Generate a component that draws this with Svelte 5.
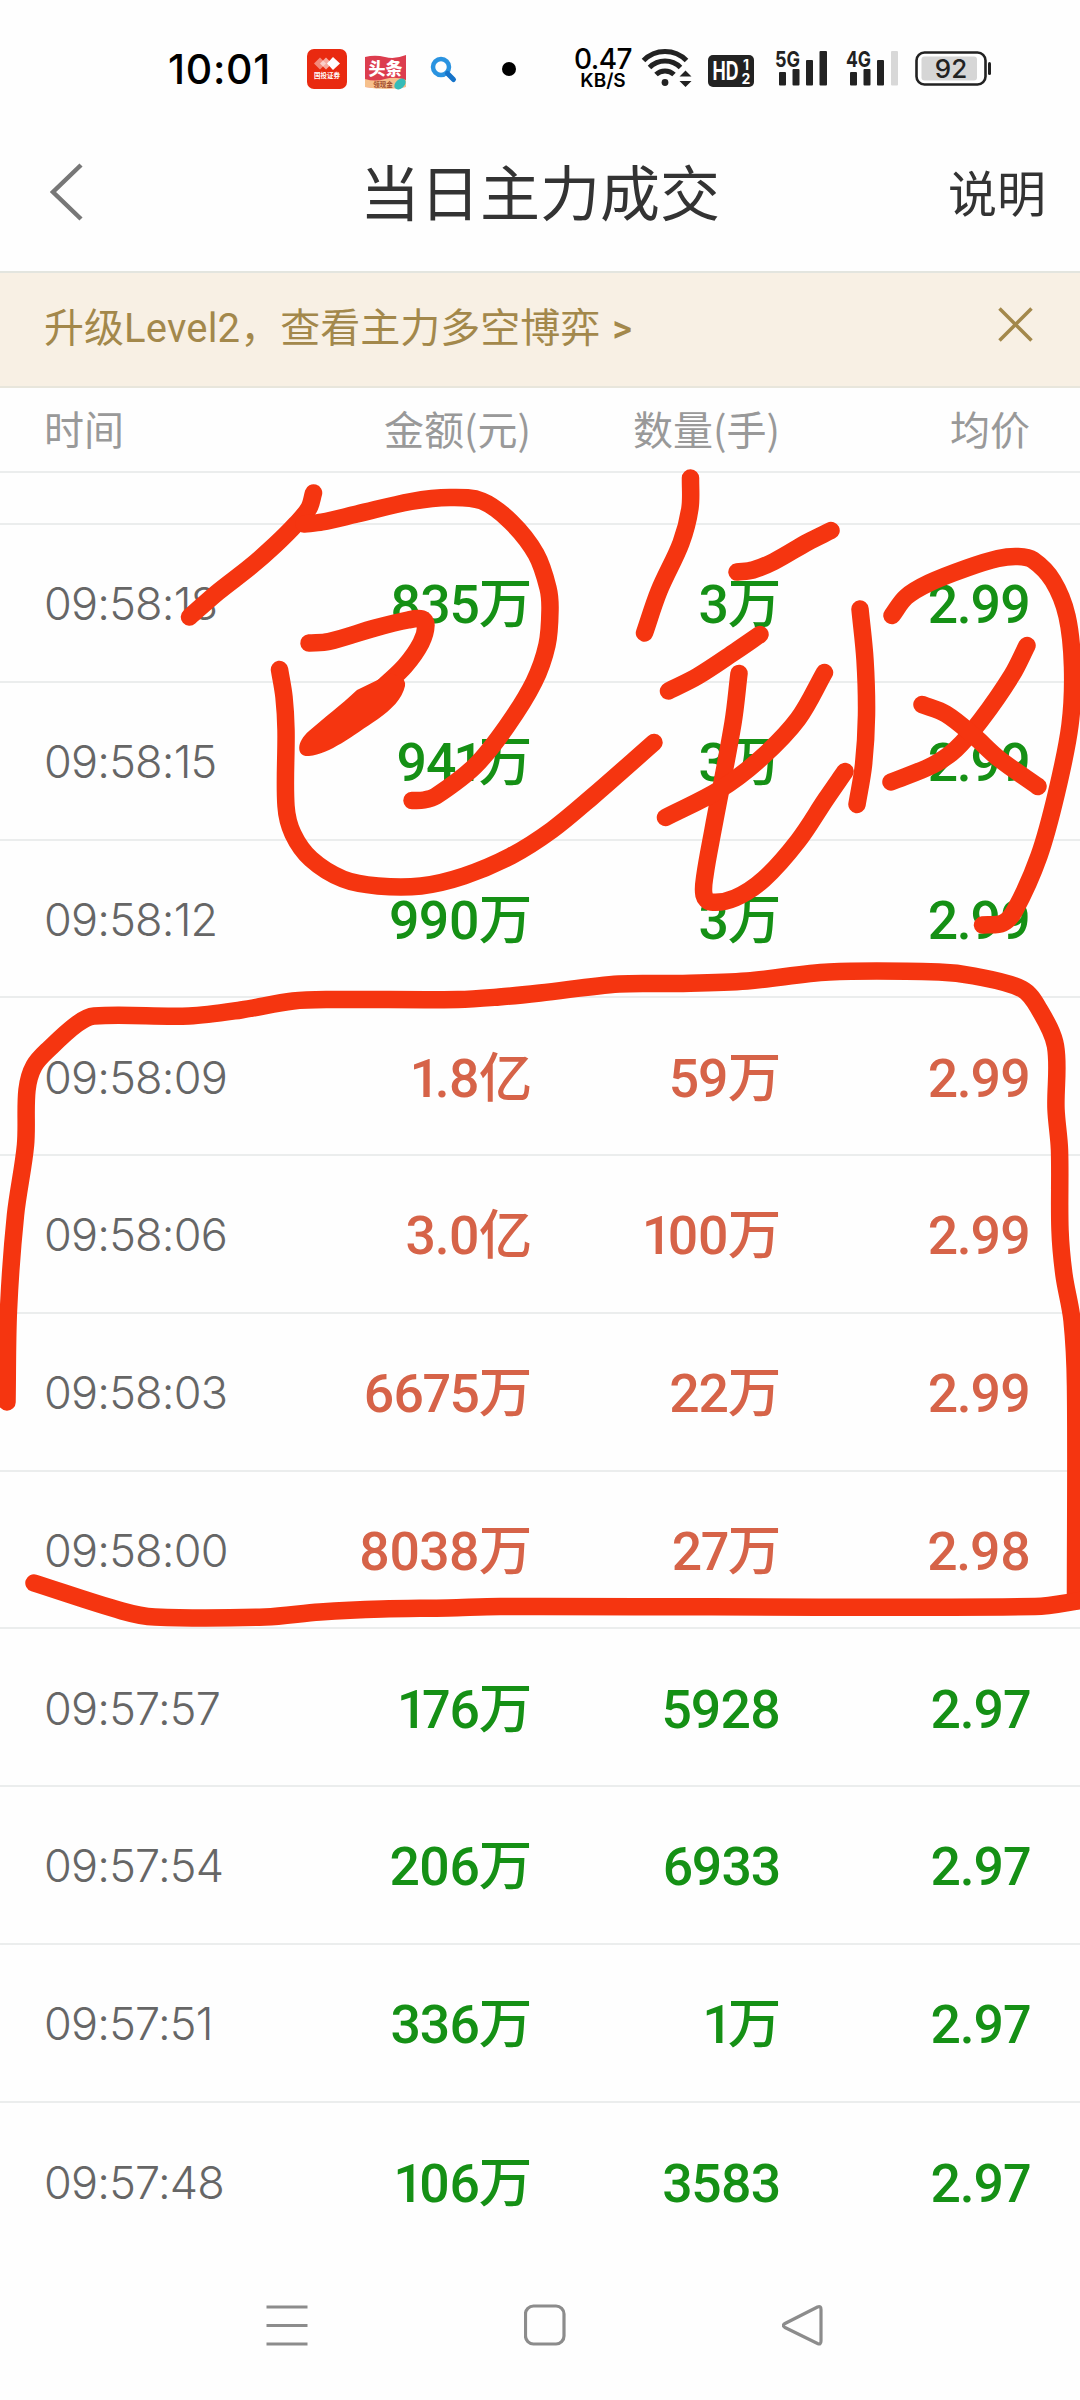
<script lang="ts">
  type Trend = 'up' | 'down';
  type Point = [number, number];

  interface Trade {
    time: string;
    amount: string;
    volume: string;
    price: string;
    trend: Trend;
  }

  const trades: Trade[] = [
    { time: '09:58:18', amount: '835万', volume: '3万', price: '2.99', trend: 'down' },
    { time: '09:58:15', amount: '941万', volume: '3万', price: '2.99', trend: 'down' },
    { time: '09:58:12', amount: '990万', volume: '3万', price: '2.99', trend: 'down' },
    { time: '09:58:09', amount: '1.8亿', volume: '59万', price: '2.99', trend: 'up' },
    { time: '09:58:06', amount: '3.0亿', volume: '100万', price: '2.99', trend: 'up' },
    { time: '09:58:03', amount: '6675万', volume: '22万', price: '2.99', trend: 'up' },
    { time: '09:58:00', amount: '8038万', volume: '27万', price: '2.98', trend: 'up' },
    { time: '09:57:57', amount: '176万', volume: '5928', price: '2.97', trend: 'down' },
    { time: '09:57:54', amount: '206万', volume: '6933', price: '2.97', trend: 'down' },
    { time: '09:57:51', amount: '336万', volume: '1万', price: '2.97', trend: 'down' },
    { time: '09:57:48', amount: '106万', volume: '3583', price: '2.97', trend: 'down' }
  ];

  // Pen strokes of the hand-drawn markup, in page pixels
  const strokes: Point[][] = [
    [[313.5, 493], [309, 508], [296, 524], [275, 545], [250, 567], [218, 592], [189.5, 617]],
    [[304, 524], [322, 522], [357, 514], [411, 501.5], [450, 497.5], [482, 501], [511, 522], [536, 554], [548, 588], [550, 610], [547, 645], [534, 682], [507, 726], [475, 766], [436, 796], [424, 800], [412, 800.5]],
    [[309, 643], [329, 641.5], [375, 628], [408, 620], [422, 619], [426, 625], [421, 643], [405, 666], [382, 688]],
    [[279.5, 669.5], [284, 697], [286, 730], [286, 806], [293, 834], [311, 859], [343, 879], [378, 886], [421, 886], [464, 876], [511, 856], [552, 830], [592, 797], [654, 742.5]],
    [[690.5, 478], [690, 508], [681, 543], [659, 591], [644.5, 633]],
    [[737, 572], [753, 570], [774, 561.5], [808, 542], [831, 530.5]],
    [[668.5, 691], [698, 676], [736, 651], [760, 634.5]],
    [[739, 673.5], [733, 723], [713, 830], [705, 875], [704, 895], [711, 902], [735, 898], [764, 879], [798, 841], [826, 799], [845, 771.5]],
    [[665.5, 817.5], [719, 790], [760, 759], [798, 719], [824.5, 672.5]],
    [[860, 609], [865, 660], [866.5, 715], [863.5, 765], [857, 804.5]],
    [[892, 615.5], [906, 597], [929, 583], [967, 568], [998, 558.5], [1018, 556.5], [1033, 560], [1053, 581], [1067, 616], [1072.5, 667], [1070, 725], [1056.5, 793], [1039, 856], [1015, 910], [1003, 923], [982.5, 925]],
    [[1027, 645.5], [1012, 675], [981, 720], [956, 749], [933, 765], [891, 782]],
    [[922, 704.5], [946, 714], [974, 736], [998, 758], [1038, 786.5]],
    [[7, 1402], [8.5, 1310], [15.5, 1215], [25.5, 1145], [27, 1090], [34, 1066], [50, 1048], [77, 1024], [94, 1016], [189, 1016], [241, 1010], [293, 1001], [330, 999.5], [458, 999.5], [499, 997], [540, 993], [619, 984], [678, 983.5], [747, 981], [829, 972], [939, 972], [974, 976], [1022, 989], [1039, 1009], [1055.5, 1046], [1056, 1109], [1059.5, 1150], [1060, 1230], [1064, 1275], [1072, 1320], [1075.5, 1386], [1075.5, 1597]],
    [[34, 1583], [122, 1611], [155, 1617], [265, 1617], [320, 1612], [382, 1609], [448, 1608], [500, 1606.5], [1035, 1606.5], [1084, 1600]]
  ];

  function smooth(points: Point[]): string {
    let d = `M${points[0][0]} ${points[0][1]}`;
    for (let i = 0; i < points.length - 1; i++) {
      const prev = points[i - 1] ?? points[i];
      const from = points[i];
      const to = points[i + 1];
      const next = points[i + 2] ?? to;
      // cap handles at a third of the segment so uneven spacing does not overshoot
      const len = Math.hypot(to[0] - from[0], to[1] - from[1]) / 3;
      const a = Math.hypot(to[0] - prev[0], to[1] - prev[1]) || 1;
      const b = Math.hypot(next[0] - from[0], next[1] - from[1]) || 1;
      const c1x = from[0] + ((to[0] - prev[0]) / a) * len;
      const c1y = from[1] + ((to[1] - prev[1]) / a) * len;
      const c2x = to[0] - ((next[0] - from[0]) / b) * len;
      const c2y = to[1] - ((next[1] - from[1]) / b) * len;
      d += ` C${c1x} ${c1y} ${c2x} ${c2y} ${to[0]} ${to[1]}`;
    }
    return d;
  }
</script>

<div class="screen">
  <div class="status-bar">
    <span class="clock">10:01</span>
    <svg class="app-icons" width="220" height="50" viewBox="300 44 220 50">
      <rect x="307" y="49" width="40" height="40" rx="7" fill="#e92a10" />
      <g fill="#fff">
        <path d="M314 63.500l6-6 6 6-6 6z" opacity="0.45" />
        <path d="M320 63.500l6-6 6 6-6 6z" opacity="0.6" />
        <path d="M327 63.500l6-6.500 7 6.500-7 6.500z" />
        <text x="327" y="77.500" class="tiny-label">国投证券</text>
      </g>
      <path d="M365 57q10-2.500 20 0t21-2v32q-10 1-20 1t-21-1z" fill="#dc3d4e" />
      <path d="M365 79q10 3 20 0t21 1v7q-10 2-20 2t-21-2z" fill="#f6c08c" />
      <ellipse cx="400" cy="84" rx="6.500" ry="4.500" transform="rotate(-42 400 84)" fill="#35bcb8" />
      <text x="385.500" y="74.500" class="news-label">头条</text>
      <text x="383" y="87" class="gift-label">领现金</text>
      <circle cx="441" cy="67" r="8" fill="none" stroke="#2a93e0" stroke-width="4.500" />
      <path d="M447.500 73.500l6 6" stroke="#1573c9" stroke-width="5" stroke-linecap="round" />
      <circle cx="509" cy="69" r="7" fill="#000" />
    </svg>
    <div class="net-speed">
      <span class="rate">0.47</span>
      <span class="unit">KB/S</span>
    </div>
    <svg class="signals" width="360" height="50" viewBox="640 44 360 50">
      <g fill="none" stroke="#222" stroke-width="5">
        <path d="M643.500 60.500a30 30 0 0 1 43 0" />
        <path d="M649.500 67.500a22 22 0 0 1 31 0" />
        <path d="M656 74.500a13 13 0 0 1 18 0" />
      </g>
      <circle cx="665" cy="82.500" r="3.400" fill="#222" />
      <path d="M685.500 70.500l6 6h-12zM685.500 87l-6-6h12z" fill="#222" />
      <rect x="708" y="55" width="46" height="32" rx="5" fill="#222" />
      <text x="712.500" y="79.500" class="hd-label" textLength="26" lengthAdjust="spacingAndGlyphs">HD</text>
      <text x="746" y="70" class="hd-index">1</text>
      <text x="746" y="83.500" class="hd-index">2</text>
      <g fill="#222">
        <text x="775" y="66.500" class="gen-label" textLength="25" lengthAdjust="spacingAndGlyphs">5G</text>
        <rect x="779" y="72" width="7" height="13.500" rx="1" />
        <rect x="792.500" y="69" width="7" height="16.500" rx="1" />
        <rect x="806" y="60" width="7" height="25.500" rx="1" />
        <rect x="819.500" y="51" width="7.500" height="34.500" rx="1" />
        <text x="846" y="66.500" class="gen-label" textLength="25" lengthAdjust="spacingAndGlyphs">4G</text>
        <rect x="850" y="72" width="7" height="13.500" rx="1" />
        <rect x="863.500" y="69" width="7" height="16.500" rx="1" />
        <rect x="877" y="60" width="7" height="25.500" rx="1" />
        <rect x="891" y="51" width="7" height="34.500" rx="1" fill="#d8d8d8" />
      </g>
      <rect x="916.500" y="52.500" width="69" height="32" rx="8" fill="#fff" stroke="#222" stroke-width="2.600" />
      <rect x="921.500" y="56.500" width="55.500" height="24" rx="3" fill="#d6d6d6" />
      <rect x="988" y="62" width="3" height="13" rx="1.500" fill="#222" />
      <text x="951" y="78" class="battery-label">92</text>
    </svg>
  </div>

  <header class="title-bar">
    <svg class="back" width="34" height="62" viewBox="0 0 34 62">
      <path d="M31 4L3 31l28 27" fill="none" stroke="#777" stroke-width="4.500" />
    </svg>
    <h1>当日主力成交</h1>
    <span class="explain">说明</span>
  </header>

  <div class="banner">
    <span class="promo">升级<span class="latin">Level2</span>，查看主力多空博弈<span class="arrow">&gt;</span></span>
    <svg width="35" height="35" viewBox="0 0 35 35">
      <path d="M1.500 1.500l32 32M33.500 1.500l-32 32" stroke="#a3884b" stroke-width="3.500" />
    </svg>
  </div>

  <div class="columns head">
    <span>时间</span>
    <span>金额(元)</span>
    <span>数量(手)</span>
    <span>均价</span>
  </div>
  <div class="cut-row"></div>

  <main>
    {#each trades as trade (trade.time)}
      <div class="columns row {trade.trend}">
        <span class="time">{trade.time}</span>
        <span class="value">{trade.amount}</span>
        <span class="value">{trade.volume}</span>
        <span class="value">{trade.price}</span>
      </div>
    {/each}
  </main>

  <nav>
    <svg width="42" height="42" viewBox="0 0 42 42">
      <path d="M0.500 3h41M0.500 21.500h41M0.500 40h41" />
    </svg>
    <svg width="42" height="42" viewBox="0 0 42 42">
      <rect x="1.500" y="2" width="38.500" height="38" rx="8" />
    </svg>
    <svg width="42" height="42" viewBox="0 0 42 42">
      <path d="M35.500 3L3 19.500q-3.500 2 0 4l32.500 16q3.500 1.500 3.500-2.500v-31.500q0-4-3.500-2.500z" />
    </svg>
  </nav>

  <svg class="markup" width="1080" height="2400" viewBox="0 0 1080 2400">
    {#each strokes as stroke}
      <path class="pen" d={smooth(stroke)} />
    {/each}
    <path class="blob" d="M392 673L357 690C340 706 325 717 309 731C296 742 296 757 309 756C330 754 352 736 378 719C392 709 402 699 405 686Q406 679 399 677Z" />
  </svg>
</div>

<style>
  :global(body) {
    margin: 0;
    background: #fefefe;
  }

  .screen {
    position: relative;
    display: flex;
    flex-direction: column;
    width: 1080px;
    height: 2400px;
    overflow: hidden;
    background: #fefefe;
    font-family: Inter, 'Noto Sans CJK SC', sans-serif;
  }

  .status-bar {
    display: flex;
    align-items: center;
    height: 138px;
    box-sizing: border-box;
    padding-left: 168px;
    color: #000;
  }

  .clock {
    width: 132px;
    font-size: 41px;
    font-weight: 450;
    letter-spacing: 0.7px;
    white-space: nowrap;
  }

  .app-icons,
  .signals {
    flex: none;
  }

  .net-speed {
    display: flex;
    flex-direction: column;
    align-items: center;
    width: 72px;
    margin: 2px 1px 0 47px;
    font-weight: 600;
  }

  .rate {
    font-size: 28px;
    font-weight: 500;
    letter-spacing: -0.5px;
    line-height: 22px;
  }

  .unit {
    font-size: 19px;
    line-height: 22px;
  }

  .tiny-label {
    font-size: 6.5px;
    font-weight: 700;
    text-anchor: middle;
  }

  .news-label {
    font-size: 17px;
    font-weight: 900;
    text-anchor: middle;
    fill: #fff;
  }

  .gift-label {
    font-size: 6.5px;
    font-weight: 700;
    text-anchor: middle;
    fill: #a04a2c;
  }

  .hd-label {
    font-size: 25px;
    font-weight: 700;
    fill: #fff;
  }

  .hd-index {
    font-size: 14px;
    font-weight: 700;
    text-anchor: middle;
    fill: #fff;
  }

  .gen-label {
    font-size: 22px;
    font-weight: 700;
  }

  .battery-label {
    font-size: 26px;
    font-weight: 500;
    text-anchor: middle;
    fill: #222;
  }

  .title-bar {
    display: grid;
    grid-template-columns: 200px 1fr 200px;
    align-items: center;
    height: 133px;
    box-sizing: border-box;
    padding: 0 34px 22px 50px;
    color: #333;
  }

  .back {
    margin-bottom: 4px;
  }

  .title-bar h1 {
    margin: 0 0 0 -16px;
    font-size: 60px;
    font-weight: 400;
    line-height: 80px;
    text-align: center;
  }

  .explain {
    margin-bottom: 7px;
    font-size: 49px;
    text-align: right;
  }

  .banner {
    display: flex;
    align-items: center;
    justify-content: space-between;
    height: 117px;
    box-sizing: border-box;
    padding: 0 47px 9px 44px;
    border-top: 2px solid #e3e5df;
    border-bottom: 2px solid #e8e6dc;
    background: #f8f0e4;
    color: #a3884b;
    font-size: 40px;
  }

  .banner svg {
    margin-bottom: 2px;
  }

  .promo {
    white-space: nowrap;
  }

  .latin {
    font-family: Roboto, sans-serif;
    letter-spacing: 0.2px;
  }

  .arrow {
    margin-left: 12px;
    font-family: Roboto, sans-serif;
    font-size: 38px;
    font-weight: 500;
  }

  .columns {
    display: grid;
    grid-template-columns: 230px 257px 249px 250px;
    align-items: center;
    box-sizing: border-box;
    padding-left: 44px;
    border-bottom: 2px solid #ebeded;
  }

  .columns > span:not(:first-child) {
    text-align: right;
  }

  .head {
    height: 85px;
    padding-bottom: 4px;
    color: #999;
    font-family: 'Noto Sans CJK SC', sans-serif;
    font-size: 40px;
  }

  .cut-row {
    height: 52px;
    box-sizing: border-box;
    border-bottom: 2px solid #ebeded;
  }

  .row {
    height: 157.75px;
    padding-top: 2px;
  }

  .row:last-child {
    border-bottom: 0;
  }

  .time {
    color: #666;
    font-size: 45px;
    font-weight: 350;
    letter-spacing: -0.8px;
  }

  .value {
    padding-top: 3px;
    font-family: Roboto, 'Noto Sans CJK SC', sans-serif;
    font-size: 53.5px;
    font-weight: 550;
    font-variant-numeric: proportional-nums;
    letter-spacing: -1.2px;
    line-height: 80px;
  }

  .up .value {
    color: #d66348;
  }

  .down .value {
    color: #159015;
  }

  nav {
    display: flex;
    gap: 216px;
    padding: 44px 0 0 266px;
  }

  nav svg {
    fill: none;
    stroke: #8c8c8c;
    stroke-width: 3.2;
  }

  .markup {
    position: absolute;
    inset: 0;
    pointer-events: none;
  }

  .pen {
    fill: none;
    stroke: #f53510;
    stroke-width: 17.5;
    stroke-linecap: round;
    stroke-linejoin: round;
  }

  .blob {
    fill: #f53510;
  }
</style>
